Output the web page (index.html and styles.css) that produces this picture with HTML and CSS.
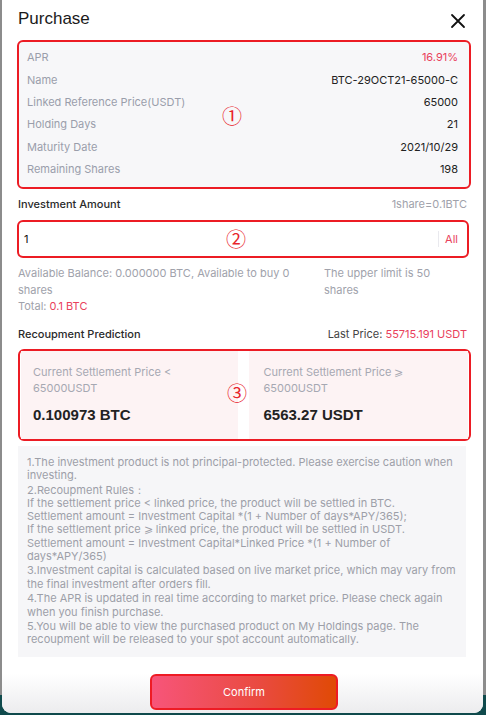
FILE: index.html
```html
<!DOCTYPE html>
<html lang="en">
<head>
  <meta charset="UTF-8" />
  <meta name="viewport" content="width=device-width, initial-scale=1.0"/>
  <title>Purchase</title>
  <link rel="stylesheet" href="styles.css">
</head>
<body>
  <div class="modal">
    <div class="modal-head">
      <h1>Purchase</h1>
      <svg class="close" width="16" height="16" viewBox="0 0 16 16">
        <path d="M2 2 L14 14 M14 2 L2 14" stroke="#111" stroke-width="1.8" stroke-linecap="round"/>
      </svg>
    </div>

    <div class="info mark">
      <div class="row"><span>APR</span><b class="red">16.91%</b></div>
      <div class="row"><span>Name</span><b>BTC-29OCT21-65000-C</b></div>
      <div class="row"><span>Linked Reference Price(USDT)</span><b>65000</b></div>
      <div class="row"><span>Holding Days</span><b>21</b></div>
      <div class="row"><span>Maturity Date</span><b>2021/10/29</b></div>
      <div class="row"><span>Remaining Shares</span><b>198</b></div>
      <i class="num num1">①</i>
    </div>

    <div class="sub-head">
      <span class="title">Investment Amount</span>
      <span class="grey">1share=0.1BTC</span>
    </div>
    <div class="amount mark">
      <span class="value">1</span>
      <span class="all">All</span>
      <i class="num num2">②</i>
    </div>
    <div class="balance">
      <div class="bal-left">
        <p>Available Balance: 0.000000 BTC, Available to buy 0 shares</p>
        <p>Total: <span class="red">0.1 BTC</span></p>
      </div>
      <div class="bal-right">
        <p>The upper limit is 50 shares</p>
      </div>
    </div>

    <div class="sub-head recoup-head">
      <span class="title">Recoupment Prediction</span>
      <span class="last">Last Price: <span class="red">55715.191 USDT</span></span>
    </div>
    <div class="predict mark">
      <div class="card">
        <p>Current Settlement Price &lt;<br>65000USDT</p>
        <b>0.100973 BTC</b>
      </div>
      <div class="card">
        <p>Current Settlement Price ⩾<br>65000USDT</p>
        <b>6563.27 USDT</b>
      </div>
      <i class="num num3">③</i>
    </div>

    <div class="rules">
      <p>1.The investment product is not principal-protected. Please exercise caution when investing.</p>
      <p>2.Recoupment Rules：<br>
        If the settlement price &lt; linked price, the product will be settled in BTC.<br>
        Settlement amount = Investment Capital *(1 + Number of days*APY/365);<br>
        If the settlement price ⩾ linked price, the product will be settled in USDT.<br>
        Settlement amount = Investment Capital*Linked Price *(1 + Number of days*APY/365)</p>
      <p>3.Investment capital is calculated based on live market price, which may vary from the final investment after orders fill.</p>
      <p>4.The APR is updated in real time according to market price. Please check again when you finish purchase.</p>
      <p>5.You will be able to view the purchased product on My Holdings page. The recoupment will be released to your spot account automatically.</p>
    </div>

    <div class="modal-foot">
      <button class="confirm">Confirm</button>
    </div>
  </div>
</body>
</html>
```

FILE: styles.css
```css
html, body {
  margin: 0;
  height: 715px;
  overflow: hidden;
}

body {
  font-family: Inter, "Liberation Sans", Arial, sans-serif;
  background: linear-gradient(to bottom, #8c8c8c 0, #8c8c8c 695px, #0f4a4c 695px);
}

p {
  margin: 0;
}

.modal {
  margin: 0 3px 0 2px;
  height: 713px;
  background: #fff;
  border-radius: 0 0 9px 9px;
  display: flex;
  flex-direction: column;
  overflow: hidden;
  position: relative;
}

.modal-head {
  display: flex;
  justify-content: space-between;
  align-items: center;
  height: 38px;
  padding: 0 17px 0 16px;
}

.modal-head h1 {
  margin: 0;
  font-family: "Liberation Sans", Arial, sans-serif;
  font-size: 17px;
  font-weight: normal;
  color: #1a1a1a;
}

.close {
  margin-top: 4px;
}

.mark {
  border: 2px solid #ec1c24;
  border-radius: 6px;
  position: relative;
}

.num {
  position: absolute;
  font-style: normal;
  font-family: "Noto Sans CJK SC", "DejaVu Sans", sans-serif;
  font-size: 20px;
  line-height: 20px;
  color: #e8232b;
}

.num1 { left: 203px; top: 64px; }
.num2 { left: 207px; top: 7px; }
.num3 { left: 207px; top: 32px; }

.red {
  color: #e9415c;
}

.info {
  margin: 2px 12px 0 15px;
  padding: 4px 11px 7px 8px;
  background: #f7f7f9;
}

.info .row {
  display: flex;
  justify-content: space-between;
  align-items: center;
  height: 22.4px;
  font-size: 11px;
}

.info .row span {
  color: #9a9eab;
}

.info .row b {
  font-weight: normal;
  color: #222;
}

.info .row b.red {
  color: #e9415c;
}

.sub-head {
  display: flex;
  justify-content: space-between;
  align-items: center;
  height: 24px;
  margin-top: 3px;
  padding: 0 16px;
  font-size: 11px;
}

.sub-head .title {
  color: #2a2a2a;
  font-weight: 500;
}

.grey {
  color: #a0a2ab;
}

.last {
  color: #444;
}

.amount {
  display: flex;
  align-items: center;
  height: 34px;
  margin: 4px 14px 0 15px;
  padding: 0 9px 0 5px;
  font-size: 11px;
}

.amount .value {
  flex: 1;
  color: #111;
}

.amount .all {
  color: #e9415c;
  padding-left: 6px;
  border-left: 1px solid #e9e9ee;
  line-height: 16px;
}

.balance {
  display: flex;
  padding: 7px 16px 0;
  font-size: 11px;
  line-height: 16.5px;
  color: #a0a2ab;
}

.bal-left {
  width: 290px;
  flex: none;
}

.bal-right {
  width: 120px;
  margin-left: 16px;
}

.recoup-head {
  margin-top: 7px;
}

.predict {
  display: flex;
  gap: 11px;
  margin: 3px 12px 0 16px;
  padding: 0 1px;
  height: 88px;
}

.card {
  flex: 1;
  background: #fdf3f4;
  padding: 13px 14px 0 12px;
}

.card + .card {
  padding-left: 15px;
}

.card p {
  font-size: 11px;
  line-height: 16px;
  color: #a6a8b2;
}

.card b {
  display: block;
  margin-top: 10px;
  font-family: "Liberation Sans", Arial, sans-serif;
  font-size: 15px;
  color: #222;
}

.rules {
  margin: 5px 17px 0 16px;
  padding: 10px 9px 10px 9px;
  background: #f6f6f8;
  font-size: 11px;
  line-height: 13.2px;
  color: #9d9fa8;
}

.rules p + p {
  margin-top: 1.5px;
}

.modal-foot {
  flex: 1;
  display: flex;
  justify-content: center;
  align-items: flex-end;
  padding-bottom: 3px;
  background: linear-gradient(to bottom, #fff 0, #fff 30%, #ececee 100%);
}

.confirm {
  width: 188px;
  height: 36px;
  margin-left: 3px;
  border: 2px solid #ee1b24;
  border-radius: 6px;
  background: linear-gradient(to right, #f7557a, #e94a3e 60%, #e04a05);
  color: #fff;
  font-family: Inter, "Liberation Sans", Arial, sans-serif;
  font-size: 11px;
  cursor: pointer;
}
```
